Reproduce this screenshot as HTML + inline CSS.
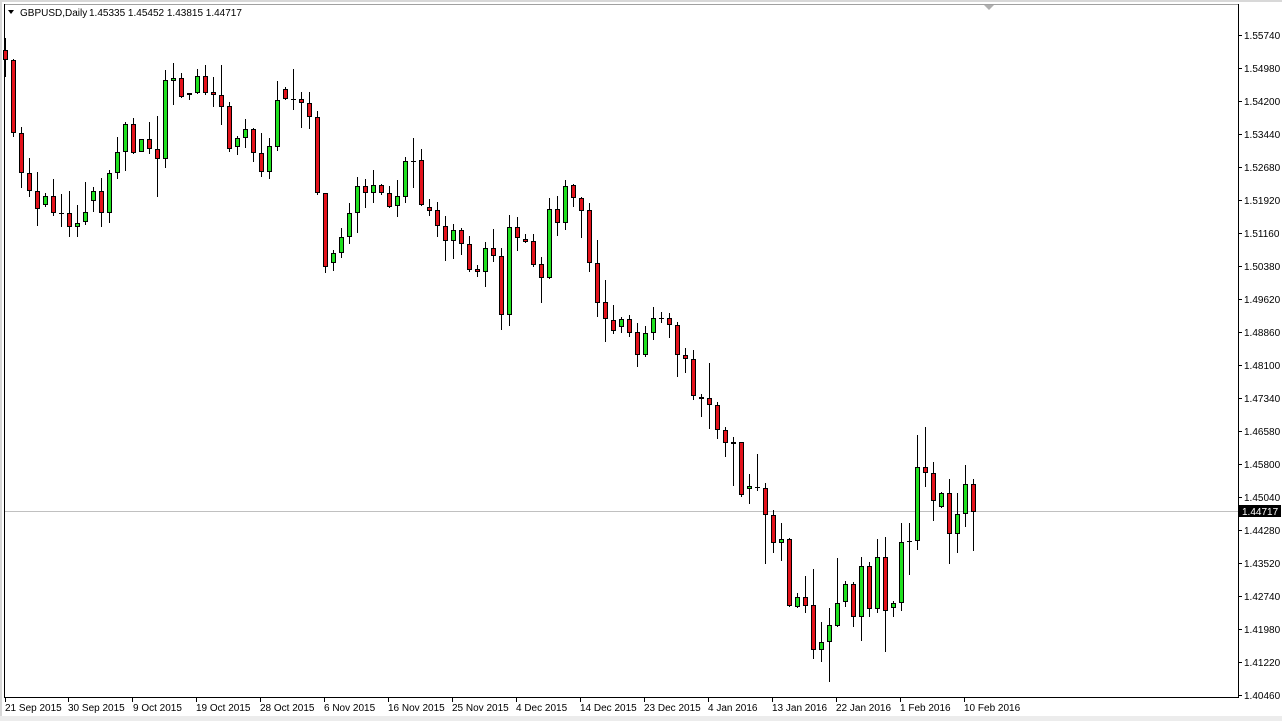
<!DOCTYPE html>
<html><head><meta charset="utf-8"><style>
html,body{margin:0;padding:0;background:#fff;width:1282px;height:721px;overflow:hidden;font-family:"Liberation Sans",sans-serif;}
svg{position:absolute;left:0;top:0}
text{font-family:"Liberation Sans",sans-serif;font-size:10px;fill:#000}
</style></head><body>
<svg width="1282" height="721" viewBox="0 0 1282 721" shape-rendering="crispEdges">
<rect x="0" y="0" width="1282" height="721" fill="#fff"/>
<rect x="0" y="716" width="1282" height="5" fill="#ececec"/>
<rect x="0" y="0" width="1282" height="2" fill="#d8d8d8"/>
<rect x="0" y="0" width="2" height="716" fill="#d8d8d8"/>
<path d="M4.5 4.5H1238.5V697.5H4.5Z" fill="none" stroke="#000" stroke-width="1"/>
<path d="M5 4.5H1238" stroke="#a0a0a0"/>
<path d="M984 5H994L989 10Z" fill="#b0b0b0" shape-rendering="auto"/>
<path d="M5 511.5H1238" stroke="#c0c0c0"/>
<path d="M8 10H14L11 14Z" fill="#000" shape-rendering="auto"/>
<text x="20" y="16">GBPUSD,Daily</text>
<text x="89" y="16">1.45335 1.45452 1.43815 1.44717</text>
<path fill="none" stroke="#000" d="M5.5 38V77M13.5 59V137M21.5 127V188M29.5 158V197M37.5 172V226M45.5 193V207M53.5 179V216M61.5 194V227M69.5 191V237M77.5 205V237M85.5 182V225M93.5 187V212M101.5 178V227M109.5 170V223M117.5 137V179M125.5 122V171M133.5 118V154M141.5 139V152M149.5 122V154M157.5 116V197M165.5 70V168M173.5 63V105M181.5 73V98M189.5 93V100M197.5 69V94M205.5 65V95M213.5 77V107M221.5 65V125M229.5 102V152M237.5 136V155M245.5 119V148M253.5 128V162M261.5 133V177M269.5 138V179M277.5 81V151M285.5 87V100M293.5 69V110M301.5 92V128M309.5 92V129M317.5 111V195M325.5 193V273M333.5 250V271M341.5 228V258M349.5 203V244M357.5 177V233M365.5 179V208M373.5 170V203M381.5 184V195M389.5 186V208M397.5 180V217M405.5 157V203M413.5 138V188M421.5 149V206M429.5 199V216M437.5 202V237M445.5 216V261M453.5 224V259M461.5 228V255M469.5 236V272M477.5 265V277M485.5 242V287M493.5 229V262M501.5 248V330M509.5 215V326M517.5 217V251M525.5 234V243M533.5 234V267M541.5 257V303M549.5 198V279M557.5 196V236M565.5 180V230M573.5 184V207M581.5 197V238M589.5 203V272M597.5 240V317M605.5 280V342M613.5 305V334M621.5 317V333M629.5 315V337M637.5 323V367M645.5 326V357M653.5 307V340M661.5 312V323M669.5 313V338M677.5 322V377M685.5 348V373M693.5 350V400M701.5 394V417M709.5 363V429M717.5 402V439M725.5 427V457M733.5 437V486M741.5 442V497M749.5 474V504M757.5 454V491M765.5 483V564M773.5 510V553M781.5 523V561M789.5 538V607M797.5 593V608M805.5 576V613M813.5 569V659M821.5 622V662M829.5 608V682M837.5 558V627M845.5 581V607M853.5 582V627M861.5 557V641M869.5 562V617M877.5 539V613M885.5 537V652M893.5 601V617M901.5 523V611M909.5 523V575M917.5 435V550M925.5 427V487M933.5 462V521M941.5 492V508M949.5 479V564M957.5 493V553M965.5 465V527M973.5 479V551"/>
<path fill="none" stroke="#000" d="M59 213.5H64M291 99.5H296M411 161.5H416M659 318.5H664M755 487.5H760M907 541.5H912"/>
<g fill="#e3121b" stroke="#000" stroke-width="1">
<rect x="3.5" y="50.5" width="4" height="9"/><rect x="11.5" y="60.5" width="4" height="72"/><rect x="19.5" y="133.5" width="4" height="39"/><rect x="27.5" y="173.5" width="4" height="17"/><rect x="35.5" y="191.5" width="4" height="17"/><rect x="51.5" y="196.5" width="4" height="16"/><rect x="67.5" y="213.5" width="4" height="13"/><rect x="99.5" y="191.5" width="4" height="21"/><rect x="131.5" y="124.5" width="4" height="28"/><rect x="147.5" y="139.5" width="4" height="9"/><rect x="155.5" y="149.5" width="4" height="9"/><rect x="179.5" y="78.5" width="4" height="18"/><rect x="203.5" y="76.5" width="4" height="16"/><rect x="211.5" y="92.5" width="4" height="2"/><rect x="219.5" y="95.5" width="4" height="11"/><rect x="227.5" y="106.5" width="4" height="42"/><rect x="251.5" y="129.5" width="4" height="23"/><rect x="259.5" y="153.5" width="4" height="18"/><rect x="283.5" y="89.5" width="4" height="9"/><rect x="299.5" y="99.5" width="4" height="3"/><rect x="307.5" y="103.5" width="4" height="13"/><rect x="315.5" y="117.5" width="4" height="75"/><rect x="323.5" y="193.5" width="4" height="73"/><rect x="363.5" y="186.5" width="4" height="6"/><rect x="379.5" y="185.5" width="4" height="7"/><rect x="387.5" y="193.5" width="4" height="13"/><rect x="419.5" y="160.5" width="4" height="44"/><rect x="427.5" y="207.5" width="4" height="3"/><rect x="435.5" y="210.5" width="4" height="15"/><rect x="443.5" y="226.5" width="4" height="14"/><rect x="459.5" y="230.5" width="4" height="13"/><rect x="467.5" y="244.5" width="4" height="25"/><rect x="475.5" y="269.5" width="4" height="2"/><rect x="491.5" y="248.5" width="4" height="7"/><rect x="499.5" y="256.5" width="4" height="58"/><rect x="515.5" y="227.5" width="4" height="10"/><rect x="523.5" y="239.5" width="4" height="2"/><rect x="531.5" y="241.5" width="4" height="23"/><rect x="539.5" y="264.5" width="4" height="13"/><rect x="555.5" y="209.5" width="4" height="13"/><rect x="571.5" y="185.5" width="4" height="12"/><rect x="579.5" y="198.5" width="4" height="12"/><rect x="587.5" y="210.5" width="4" height="52"/><rect x="595.5" y="263.5" width="4" height="39"/><rect x="603.5" y="302.5" width="4" height="16"/><rect x="611.5" y="320.5" width="4" height="10"/><rect x="627.5" y="319.5" width="4" height="13"/><rect x="635.5" y="332.5" width="4" height="22"/><rect x="667.5" y="318.5" width="4" height="6"/><rect x="675.5" y="325.5" width="4" height="29"/><rect x="683.5" y="355.5" width="4" height="3"/><rect x="691.5" y="359.5" width="4" height="36"/><rect x="707.5" y="398.5" width="4" height="6"/><rect x="715.5" y="405.5" width="4" height="24"/><rect x="723.5" y="430.5" width="4" height="12"/><rect x="739.5" y="442.5" width="4" height="52"/><rect x="763.5" y="488.5" width="4" height="26"/><rect x="771.5" y="515.5" width="4" height="27"/><rect x="787.5" y="539.5" width="4" height="66"/><rect x="803.5" y="597.5" width="4" height="8"/><rect x="811.5" y="605.5" width="4" height="44"/><rect x="851.5" y="584.5" width="4" height="32"/><rect x="867.5" y="566.5" width="4" height="42"/><rect x="883.5" y="557.5" width="4" height="53"/><rect x="923.5" y="467.5" width="4" height="5"/><rect x="931.5" y="473.5" width="4" height="27"/><rect x="947.5" y="493.5" width="4" height="40"/><rect x="971.5" y="484.5" width="4" height="27"/>
</g>
<g fill="#1fe01f" stroke="#000" stroke-width="1">
<rect x="43.5" y="196.5" width="4" height="8"/><rect x="75.5" y="223.5" width="4" height="3"/><rect x="83.5" y="212.5" width="4" height="9"/><rect x="91.5" y="191.5" width="4" height="9"/><rect x="107.5" y="173.5" width="4" height="39"/><rect x="115.5" y="152.5" width="4" height="20"/><rect x="123.5" y="124.5" width="4" height="27"/><rect x="139.5" y="139.5" width="4" height="12"/><rect x="163.5" y="80.5" width="4" height="78"/><rect x="171.5" y="78.5" width="4" height="2"/><rect x="187.5" y="93.5" width="4" height="1"/><rect x="195.5" y="76.5" width="4" height="16"/><rect x="235.5" y="138.5" width="4" height="8"/><rect x="243.5" y="129.5" width="4" height="8"/><rect x="267.5" y="146.5" width="4" height="25"/><rect x="275.5" y="100.5" width="4" height="46"/><rect x="331.5" y="253.5" width="4" height="9"/><rect x="339.5" y="237.5" width="4" height="15"/><rect x="347.5" y="213.5" width="4" height="23"/><rect x="355.5" y="186.5" width="4" height="26"/><rect x="371.5" y="185.5" width="4" height="7"/><rect x="395.5" y="196.5" width="4" height="9"/><rect x="403.5" y="161.5" width="4" height="35"/><rect x="451.5" y="230.5" width="4" height="10"/><rect x="483.5" y="248.5" width="4" height="23"/><rect x="507.5" y="227.5" width="4" height="87"/><rect x="547.5" y="209.5" width="4" height="68"/><rect x="563.5" y="186.5" width="4" height="36"/><rect x="619.5" y="319.5" width="4" height="7"/><rect x="643.5" y="333.5" width="4" height="21"/><rect x="651.5" y="318.5" width="4" height="14"/><rect x="699.5" y="397.5" width="4" height="1"/><rect x="731.5" y="442.5" width="4" height="1"/><rect x="747.5" y="486.5" width="4" height="2"/><rect x="779.5" y="539.5" width="4" height="3"/><rect x="795.5" y="597.5" width="4" height="9"/><rect x="819.5" y="642.5" width="4" height="7"/><rect x="827.5" y="625.5" width="4" height="16"/><rect x="835.5" y="603.5" width="4" height="22"/><rect x="843.5" y="584.5" width="4" height="17"/><rect x="859.5" y="566.5" width="4" height="50"/><rect x="875.5" y="557.5" width="4" height="51"/><rect x="891.5" y="603.5" width="4" height="4"/><rect x="899.5" y="542.5" width="4" height="60"/><rect x="915.5" y="467.5" width="4" height="73"/><rect x="939.5" y="493.5" width="4" height="13"/><rect x="955.5" y="514.5" width="4" height="19"/><rect x="963.5" y="484.5" width="4" height="29"/>
</g>
<path stroke="#000" d="M1239 35.5H1242M1239 68.5H1242M1239 101.5H1242M1239 134.5H1242M1239 167.5H1242M1239 200.5H1242M1239 233.5H1242M1239 266.5H1242M1239 299.5H1242M1239 332.5H1242M1239 365.5H1242M1239 398.5H1242M1239 431.5H1242M1239 464.5H1242M1239 497.5H1242M1239 530.5H1242M1239 563.5H1242M1239 596.5H1242M1239 629.5H1242M1239 662.5H1242M1239 695.5H1242"/>
<g>
<text x="1244" y="39">1.55740</text><text x="1244" y="72">1.54980</text><text x="1244" y="105">1.54200</text><text x="1244" y="138">1.53440</text><text x="1244" y="171">1.52680</text><text x="1244" y="204">1.51920</text><text x="1244" y="237">1.51160</text><text x="1244" y="270">1.50380</text><text x="1244" y="303">1.49620</text><text x="1244" y="336">1.48860</text><text x="1244" y="369">1.48100</text><text x="1244" y="402">1.47340</text><text x="1244" y="435">1.46580</text><text x="1244" y="468">1.45800</text><text x="1244" y="501">1.45040</text><text x="1244" y="534">1.44280</text><text x="1244" y="567">1.43520</text><text x="1244" y="600">1.42740</text><text x="1244" y="633">1.41980</text><text x="1244" y="666">1.41220</text><text x="1244" y="699">1.40460</text>
</g>
<rect x="1239" y="505" width="42" height="12" fill="#000"/>
<text x="1242" y="515" style="fill:#fff">1.44717</text>
<path stroke="#000" d="M5.5 698V702M68.5 698V702M132.5 698V702M196.5 698V702M260.5 698V702M324.5 698V702M388.5 698V702M452.5 698V702M516.5 698V702M580.5 698V702M644.5 698V702M708.5 698V702M772.5 698V702M836.5 698V702M900.5 698V702M964.5 698V702"/>
<g>
<text x="5" y="711">21 Sep 2015</text><text x="68" y="711">30 Sep 2015</text><text x="133" y="711">9 Oct 2015</text><text x="196" y="711">19 Oct 2015</text><text x="260" y="711">28 Oct 2015</text><text x="324" y="711">6 Nov 2015</text><text x="388" y="711">16 Nov 2015</text><text x="452" y="711">25 Nov 2015</text><text x="516" y="711">4 Dec 2015</text><text x="580" y="711">14 Dec 2015</text><text x="644" y="711">23 Dec 2015</text><text x="708" y="711">4 Jan 2016</text><text x="772" y="711">13 Jan 2016</text><text x="836" y="711">22 Jan 2016</text><text x="900" y="711">1 Feb 2016</text><text x="964" y="711">10 Feb 2016</text>
</g>
</svg>
</body></html>
